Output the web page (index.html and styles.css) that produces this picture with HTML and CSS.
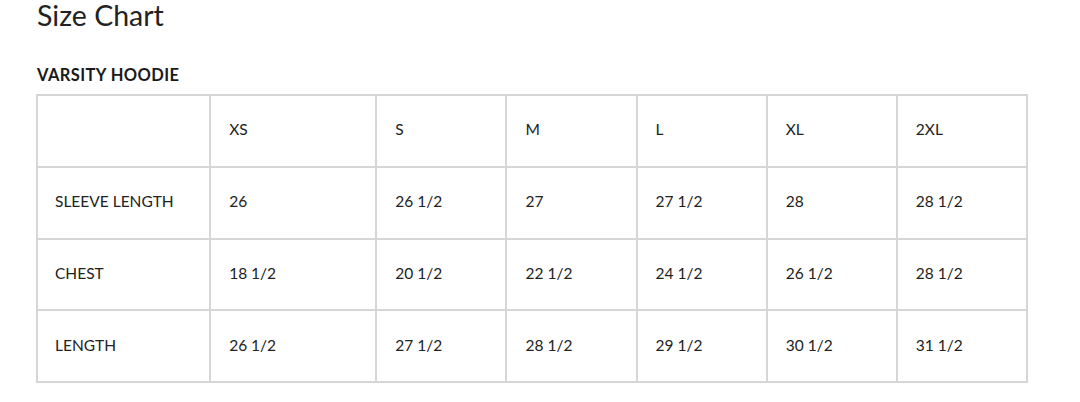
FILE: index.html
```html
<!DOCTYPE html>
<html>
<head>
<meta charset="utf-8">
<link rel="stylesheet" href="styles.css">
</head>
<body>
<div class="page">
  <h1 class="title">Size Chart</h1>
  <h2 class="product">VARSITY HOODIE</h2>
  <table class="chart">
    <colgroup>
      <col class="c-label"><col class="c-xs"><col class="c-s"><col class="c-n"><col class="c-n"><col class="c-n"><col class="c-n">
    </colgroup>
    <tr><td></td><td>XS</td><td>S</td><td>M</td><td>L</td><td>XL</td><td>2XL</td></tr>
    <tr><td>SLEEVE LENGTH</td><td>26</td><td>26 1/2</td><td>27</td><td>27 1/2</td><td>28</td><td>28 1/2</td></tr>
    <tr><td>CHEST</td><td>18 1/2</td><td>20 1/2</td><td>22 1/2</td><td>24 1/2</td><td>26 1/2</td><td>28 1/2</td></tr>
    <tr><td>LENGTH</td><td>26 1/2</td><td>27 1/2</td><td>28 1/2</td><td>29 1/2</td><td>30 1/2</td><td>31 1/2</td></tr>
  </table>
</div>
</body>
</html>
```

FILE: styles.css
```css
html, body {
  margin: 0;
  padding: 0;
  background: #ffffff;
}
body {
  font-family: Lato, "Open Sans", sans-serif;
  color: #222222;
}
.page {
  padding: 0 0 0 36px;
}
.title {
  margin: 0 0 0 1px;
  font-weight: 400;
  font-size: 28.5px;
  line-height: 30px;
  color: #222;
}
.product {
  margin: 36px 0 0 1px;
  font-size: 16.5px;
  font-weight: 700;
  letter-spacing: 0.4px;
  line-height: 18px;
  color: #1a1a1a;
}
.chart {
  margin-top: 10px;
  border-collapse: collapse;
  table-layout: fixed;
  width: 992px;
  border: 2px solid #d6d6d6;
}
.c-label { width: 173px; }
.c-xs { width: 166px; }
.c-s { width: 130px; }
.c-n { width: 130px; }
.chart td {
  border: 2px solid #d6d6d6;
  height: 66.75px;
  padding: 0 0 3px 18px;
  font-size: 15.5px;
  vertical-align: middle;
  color: #222;
  white-space: nowrap;
}
.chart td:first-child {
  padding-left: 17px;
}
```
